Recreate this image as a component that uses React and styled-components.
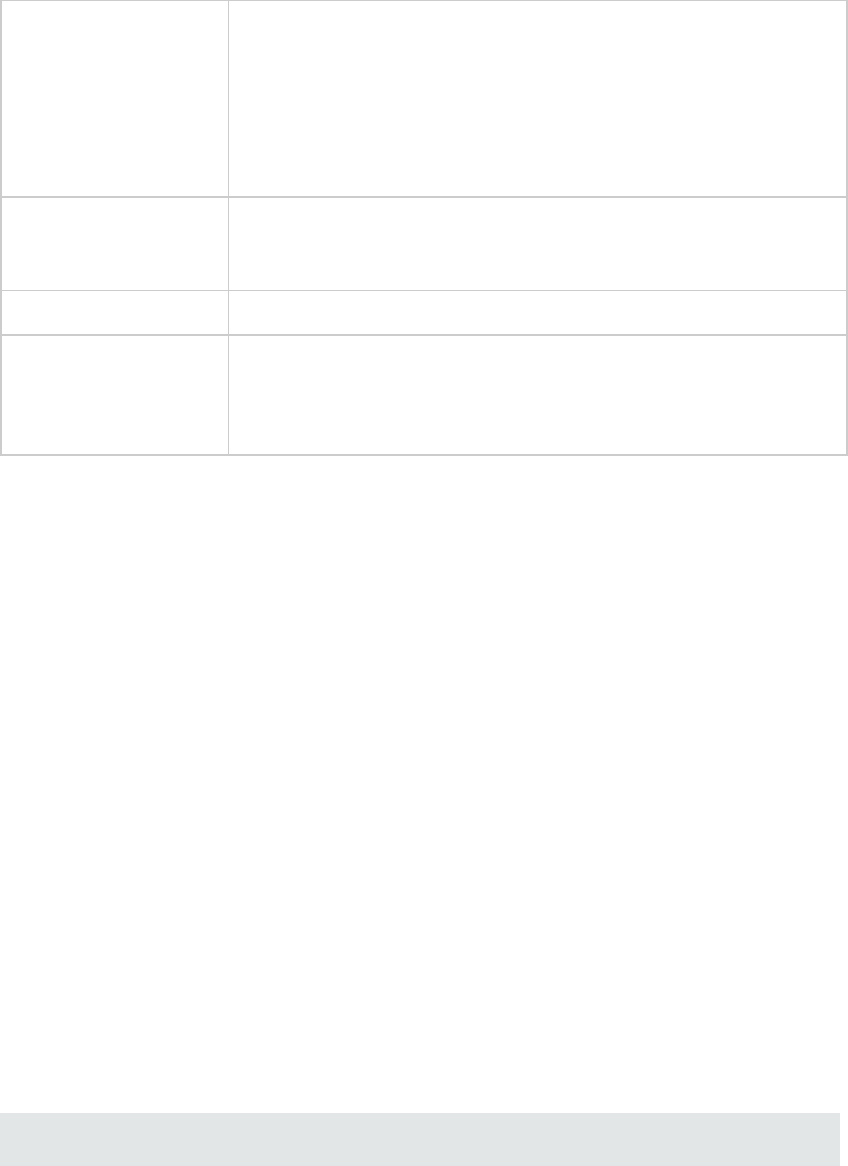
import React from 'react';
import styled, { createGlobalStyle } from 'styled-components';

const GlobalStyle = createGlobalStyle`
  html, body {
    margin: 0;
    padding: 0;
    background: #ffffff;
    font-family: "Open Sans", "Liberation Sans", Arial, sans-serif;
    font-size: 14px;
    color: #333333;
  }
`;

const Page = styled.div`
  display: flex;
  flex-direction: column;
  width: 848px;
`;

const Table = styled.table`
  width: 848px;
  border-collapse: collapse;
  table-layout: fixed;
  border-left: 2px solid #cccccc;
  border-right: 2px solid #cccccc;
  border-bottom: 2px solid #cccccc;
  border-top: 1px solid #cccccc;
`;

const Row = styled.tr`
  height: ${p => p.$height}px;
`;

const Cell = styled.td`
  border: 1px solid #cccccc;
  border-top-width: ${p => p.$thick ? 2 : 1}px;
  padding: 8px 10px;
  vertical-align: top;
`;

const LabelCell = styled(Cell)`
  width: 226px;
`;

const Footer = styled.div`
  margin-top: 657px;
  width: 840px;
  height: 56px;
  background: #e3e6e6;
`;

const rows = [
  { height: 196, thick: false },
  { height: 94, thick: true },
  { height: 44, thick: false },
  { height: 120, thick: true },
];

export default function App() {
  return (
    <>
      <GlobalStyle />
      <Page>
        <Table>
          <colgroup>
            <col style={{ width: 227 }} />
            <col />
          </colgroup>
          <tbody>
            {rows.map((r, i) => (
              <Row key={i} $height={r.height}>
                <LabelCell $thick={r.thick}></LabelCell>
                <Cell $thick={r.thick}></Cell>
              </Row>
            ))}
          </tbody>
        </Table>
        <Footer />
      </Page>
    </>
  );
}
